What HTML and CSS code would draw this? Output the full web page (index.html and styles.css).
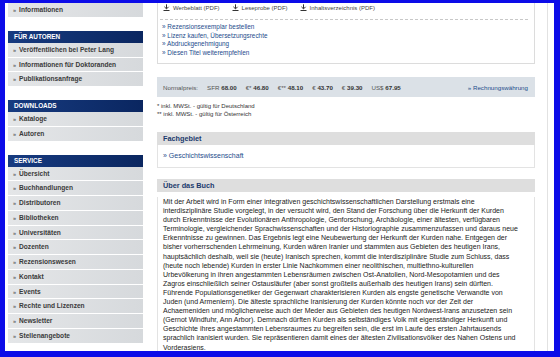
FILE: index.html
```html
<!DOCTYPE html>
<html lang="de">
<head>
    <meta charset="UTF-8">
    <title>Peter Lang - Titel</title>
    <link rel="stylesheet" href="styles.css">
</head>
<body>
<div class="page">
    <div class="container">
        <div class="sidebar">
            <div class="nav-group">
                <a class="nav-item" href="#">Informationen</a>
            </div>
            <div class="nav-group">
                <div class="nav-head">Für Autoren</div>
                <a class="nav-item" href="#">Veröffentlichen bei Peter Lang</a>
                <a class="nav-item" href="#">Informationen für Doktoranden</a>
                <a class="nav-item" href="#">Publikationsanfrage</a>
            </div>
            <div class="nav-group">
                <div class="nav-head">Downloads</div>
                <a class="nav-item" href="#">Kataloge</a>
                <a class="nav-item" href="#">Autoren</a>
            </div>
            <div class="nav-group">
                <div class="nav-head">Service</div>
                <a class="nav-item" href="#">Übersicht</a>
                <a class="nav-item" href="#">Buchhandlungen</a>
                <a class="nav-item" href="#">Distributoren</a>
                <a class="nav-item" href="#">Bibliotheken</a>
                <a class="nav-item" href="#">Universitäten</a>
                <a class="nav-item" href="#">Dozenten</a>
                <a class="nav-item" href="#">Rezensionswesen</a>
                <a class="nav-item" href="#">Kontakt</a>
                <a class="nav-item" href="#">Events</a>
                <a class="nav-item" href="#">Rechte und Lizenzen</a>
                <a class="nav-item" href="#">Newsletter</a>
                <a class="nav-item" href="#">Stellenangebote</a>
            </div>
        </div>

        <div class="main">
            <div class="card">
                <div class="downloads">
                    <a class="dl" href="#"><svg width="7" height="7" viewBox="0 0 7 7"><path d="M3.5 0.3v4.4M1.4 2.8l2.1 2.1 2.1-2.1M0.5 6.5h6" fill="none" stroke="#333" stroke-width="1"/></svg>Werbeblatt (PDF)</a>
                    <a class="dl" href="#"><svg width="7" height="7" viewBox="0 0 7 7"><path d="M3.5 0.3v4.4M1.4 2.8l2.1 2.1 2.1-2.1M0.5 6.5h6" fill="none" stroke="#333" stroke-width="1"/></svg>Leseprobe (PDF)</a>
                    <a class="dl" href="#"><svg width="7" height="7" viewBox="0 0 7 7"><path d="M3.5 0.3v4.4M1.4 2.8l2.1 2.1 2.1-2.1M0.5 6.5h6" fill="none" stroke="#333" stroke-width="1"/></svg>Inhaltsverzeichnis (PDF)</a>
                </div>
                <ul class="links">
                    <li><a href="#">» Rezensionsexemplar bestellen</a></li>
                    <li><a href="#">» Lizenz kaufen, Übersetzungsrechte</a></li>
                    <li><a href="#">» Abdruckgenehmigung</a></li>
                    <li><a href="#">» Diesen Titel weiterempfehlen</a></li>
                </ul>
            </div>

            <div class="prices">
                <span class="label">Normalpreis:</span>
                <span>SFR <b>68.00</b></span>
                <span>€* <b>46.80</b></span>
                <span>€** <b>48.10</b></span>
                <span>€ <b>43.70</b></span>
                <span>€ <b>39.30</b></span>
                <span>US$ <b>67.95</b></span>
                <a class="currency" href="#">» Rechnungswährung</a>
            </div>

            <div class="notes">
                <div>* inkl. MWSt. - gültig für Deutschland</div>
                <div>** inkl. MWSt. - gültig für Österreich</div>
            </div>

            <div class="box">
                <div class="box-head">Fachgebiet</div>
                <div class="box-body subject">
                    <a href="#">» Geschichtswissenschaft</a>
                </div>
            </div>

            <div class="box">
                <div class="box-head">Über das Buch</div>
                <div class="box-body about">
                    <p>Mit der Arbeit wird in Form einer integrativen geschichtswissenschaftlichen Darstellung erstmals eine interdisziplinäre Studie vorgelegt, in der versucht wird, den Stand der Forschung über die Herkunft der Kurden durch Erkenntnisse der Evolutionären Anthropologie, Genforschung, Archäologie, einer ältesten, verfügbaren Terminologie, vergleichender Sprachwissenschaften und der Historiographie zusammenzufassen und daraus neue Erkenntnisse zu gewinnen. Das Ergebnis legt eine Neubewertung der Herkunft der Kurden nahe. Entgegen der bisher vorherrschenden Lehrmeinung, Kurden wären Iranier und stammten aus Gebieten des heutigen Irans, hauptsächlich deshalb, weil sie (heute) Iranisch sprechen, kommt die interdisziplinäre Studie zum Schluss, dass (heute noch lebende) Kurden in erster Linie Nachkommen einer neolithischen, multiethno-kulturellen Urbevölkerung in ihren angestammten Lebensräumen zwischen Ost-Anatolien, Nord-Mesopotamien und des Zagros einschließlich seiner Ostausläufer (aber sonst großteils außerhalb des heutigen Irans) sein dürften. Führende Populationsgenetiker der Gegenwart charakterisieren Kurden als engste genetische Verwandte von Juden (und Armeniern). Die älteste sprachliche Iranisierung der Kurden könnte noch vor der Zeit der Achaemeniden und möglicherweise auch der Meder aus Gebieten des heutigen Nordwest-Irans anzusetzen sein (Gernot Windfuhr, Ann Arbor). Demnach dürften Kurden als selbständiges Volk mit eigenständiger Herkunft und Geschichte ihres angestammten Lebensraumes zu begreifen sein, die erst im Laufe des ersten Jahrtausends sprachlich iranisiert wurden. Sie repräsentieren damit eines der ältesten Zivilisationsvölker des Nahen Ostens und Vorderasiens.</p>
                </div>
            </div>
        </div>
    </div>
</div>
</body>
</html>
```

FILE: styles.css
```css
html, body {
    margin: 0;
    height: 357px;
    overflow: hidden;
}
body {
    background: #0c0ce8;
    font-family: "Liberation Sans", Arial, sans-serif;
    color: #333;
}
a {
    text-decoration: none;
}
.page {
    margin: 3px 6px 0 5px;
    height: 348px;
    background: #fff;
    padding-left: 3px;
    overflow: hidden;
}
.container {
    width: 539px;
    height: 348px;
    border-right: 1px solid #e2e2e2;
    display: flex;
    gap: 14px;
}

/* sidebar */
.sidebar {
    width: 135px;
    flex-shrink: 0;
}
.nav-group {
    margin-bottom: 13px;
}
.nav-head {
    height: 12px;
    line-height: 12px;
    padding-left: 6px;
    background: linear-gradient(to right, #173b80, #0a2660);
    color: #fff;
    font-size: 6.4px;
    font-weight: bold;
    text-transform: uppercase;
}
.nav-item {
    display: block;
    height: 13.75px;
    line-height: 13.75px;
    border-bottom: 1px solid #fff;
    padding-left: 5px;
    background: linear-gradient(to right, #e4e6e8, #d6d9dc);
    color: #3a3a3a;
    font-size: 6.6px;
    font-weight: bold;
}
.nav-item::before {
    content: "»";
    color: #666;
    font-size: 5.5px;
    margin-right: 3px;
}

/* main */
.main {
    width: 378px;
    flex-shrink: 0;
}
.card {
    border: 1px solid #dcdcdc;
    border-top: 0;
    padding: 1px 6px 6px 2px;
}
.downloads {
    display: flex;
    line-height: 9px;
    padding: 0 0 6px 3px;
    border-bottom: 1px dashed #c8c8c8;
    font-size: 6px;
}
.dl {
    color: #444;
    margin-right: 12px;
}
.dl svg {
    margin-right: 3px;
    vertical-align: -1px;
}
.links {
    list-style: none;
    margin: 3px 0 0;
    padding-left: 2px;
    font-size: 6.4px;
    line-height: 8.5px;
}
.links a {
    color: #1d4c8c;
}
.prices {
    margin-top: 13px;
    height: 20px;
    background: #dbe1e7;
    display: flex;
    align-items: center;
    gap: 9px;
    padding: 0 7px 0 6px;
    font-size: 6.2px;
    color: #555;
}
.prices b {
    color: #333;
}
.prices .currency {
    margin-left: auto;
    color: #1d4c8c;
}
.notes {
    margin-top: 5px;
    font-size: 6px;
    line-height: 8px;
    color: #333;
}
.box {
    margin-top: 14px;
}
.box + .box {
    margin-top: 11px;
}
.box-head {
    height: 13px;
    line-height: 13px;
    padding-left: 6px;
    background: #dedede;
    color: #1b3a6d;
    font-size: 7.3px;
    font-weight: bold;
}
.box-body {
    border: 1px solid #e3e3e3;
    border-top: 0;
    padding: 0 16px 0 5px;
}
.subject {
    height: 22px;
    line-height: 22px;
    font-size: 7px;
}
.subject a {
    color: #1d4c8c;
}
.about p {
    margin: 5px 0 0;
    font-size: 7px;
    line-height: 9.1px;
    color: #222;
}
```
